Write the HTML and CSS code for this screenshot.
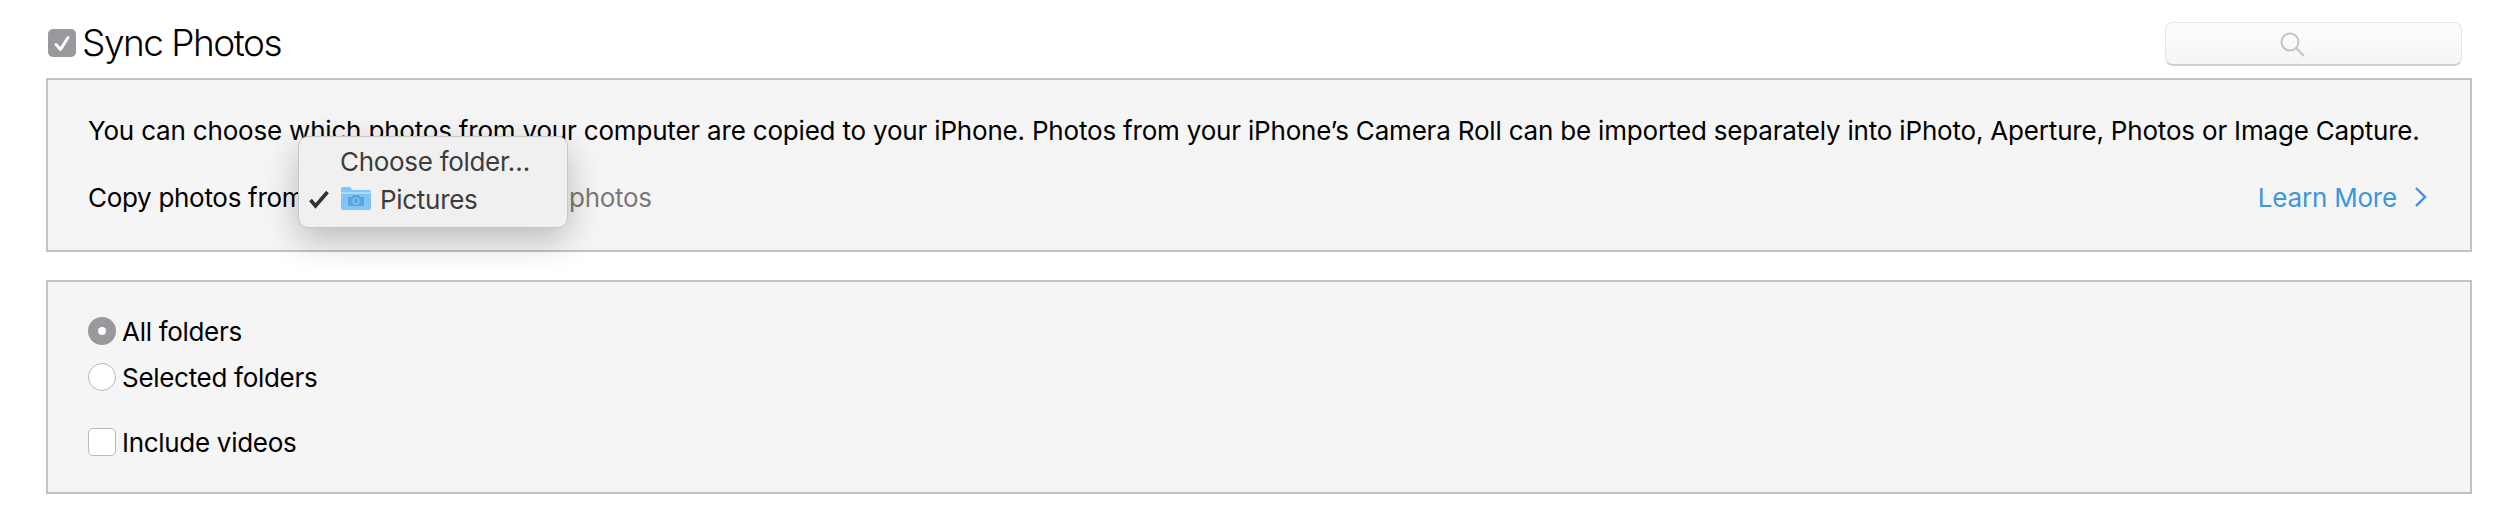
FILE: index.html
```html
<!DOCTYPE html>
<html lang="en">
<head>
<meta charset="utf-8">
<title>Sync Photos</title>
<link rel="stylesheet" href="styles.css">
</head>
<body>
<div class="page">
  <header class="head">
    <label class="title-wrap">
      <span class="check check-on">
        <svg viewBox="0 0 28 28" width="28" height="28"><path d="M8 15.500l4.500 5L20 8.500" fill="none" stroke="#fff" stroke-width="3" stroke-linecap="round" stroke-linejoin="round"/></svg>
      </span>
      <span class="title">Sync Photos</span>
    </label>
    <div class="search">
      <svg viewBox="0 0 26 26" width="26" height="26"><circle cx="11" cy="11" r="8.500" fill="none" stroke="#c4c4c4" stroke-width="2"/><path d="M17 17l8 8" stroke="#c4c4c4" stroke-width="2" fill="none"/></svg>
    </div>
  </header>

  <section class="panel panel-top">
    <p class="intro">You can choose which photos from your computer are copied to your iPhone. Photos from your iPhone’s Camera Roll can be imported separately into iPhoto, Aperture, Photos or Image Capture.</p>
    <div class="copy-row">
      <span class="copy-label">Copy photos from:</span>
      <span class="count">0 photos</span>
      <a class="learn">Learn More
        <svg viewBox="0 0 14 22" width="14" height="22"><path d="M2 2l9 9-9 9" fill="none" stroke="#3d8ee6" stroke-width="2.400"/></svg>
      </a>
    </div>
    <div class="menu">
      <div class="menu-item"><span class="tick tick-empty"></span><span>Choose folder…</span></div>
      <div class="menu-item">
        <span class="tick">
          <svg viewBox="0 0 20 20" width="20" height="20"><path d="M1.500 11l5 6L18.500 3" fill="none" stroke="#333" stroke-width="3.600"/></svg>
        </span>
        <svg class="folder" viewBox="0 0 30 24" width="30" height="24">
          <path d="M0 3a2 2 0 0 1 2-2h7l3 3h16a2 2 0 0 1 2 2v16a2 2 0 0 1-2 2H2a2 2 0 0 1-2-2z" fill="#82c4f5"/>
          <path d="M0 6h30v2H0z" fill="#a8d8fa"/>
          <path d="M7 11h3.500l1.500-2h6l1.500 2H23v9H7z" fill="#5aa5e0"/>
          <circle cx="15" cy="15" r="3" fill="none" stroke="#8cc8f5" stroke-width="1.200"/>
        </svg>
        <span>Pictures</span>
      </div>
    </div>
  </section>

  <section class="panel panel-bottom">
    <div class="opt"><span class="radio radio-on"><span class="dot"></span></span><span>All folders</span></div>
    <div class="opt"><span class="radio"></span><span>Selected folders</span></div>
    <div class="opt opt-gap"><span class="check"></span><span>Include videos</span></div>
  </section>
</div>
</body>
</html>
```

FILE: styles.css
```css
* { box-sizing: border-box; }
html, body { margin: 0; height: 100%; background: #fff; }
body { font-family: Inter, "Liberation Sans", sans-serif; color: #000; font-size: 26px; letter-spacing: -0.3px; }
.page { width: 2512px; height: 520px; padding: 22px 40px 0 46px; overflow: hidden; }
.head { display: flex; justify-content: space-between; align-items: flex-start; height: 56px; padding-right: 10px; }
.title-wrap { display: flex; align-items: center; gap: 6px; padding-left: 2px; padding-top: 7px; height: 35px; }
.title { font-size: 37px; font-weight: 300; line-height: 28px; letter-spacing: -1.5px; }
.check { display: block; width: 28px; height: 28px; border-radius: 5px; background: #fff; border: 1px solid #b8b8b8; flex: none; }
.check-on { background: #98989d; border: 0; }
.check svg { display: block; }
.search { width: 297px; height: 44px; border: 1px solid #e6e6e6; border-bottom: 2px solid #cfcfcf; border-radius: 8px; background: linear-gradient(#fdfdfd, #f5f5f5); display: flex; justify-content: center; align-items: center; padding-right: 44px; }
.panel { position: relative; background: #f5f5f5; border: 2px solid #c2c2c2; width: 2426px; }
.panel-top { height: 174px; padding: 35px 40px 0; }
.panel-bottom { height: 214px; margin-top: 28px; padding: 35px 40px 0; }
.intro { margin: 0; line-height: 32px; white-space: nowrap; letter-spacing: -0.19px; }
.copy-row { display: flex; align-items: center; margin-top: 34px; height: 32px; }
.copy-label { width: 458px; }
.count { color: #7a7a7a; }
.learn { margin-left: auto; margin-right: 2px; display: flex; align-items: center; gap: 17px; color: #3d95db; letter-spacing: -0.2px; }
.learn svg { display: block; }
.menu { position: absolute; left: 250px; top: 56px; width: 270px; height: 92px; padding-top: 5px; border-radius: 10px; background: #f0f0f0; border: 1px solid #c6c6c6; box-shadow: 0 12px 34px rgba(0,0,0,.24); color: #3c3c3c; }
.menu-item { display: flex; align-items: center; height: 38px; }
.tick { width: 42px; padding-left: 10px; flex: none; display: flex; }
.tick-empty { width: 41px; }
.folder { margin: 0 9px 2px 0; flex: none; }
.opt { display: flex; align-items: center; gap: 6px; height: 28px; margin-bottom: 18px; }
.opt-gap { margin-top: 37px; }
.radio { display: flex; align-items: center; justify-content: center; width: 28px; height: 28px; border-radius: 50%; background: #fff; border: 1px solid #b8b8b8; flex: none; }
.radio-on { background: #98989d; border: 0; }
.dot { width: 8px; height: 8px; border-radius: 50%; background: #fff; }
```
